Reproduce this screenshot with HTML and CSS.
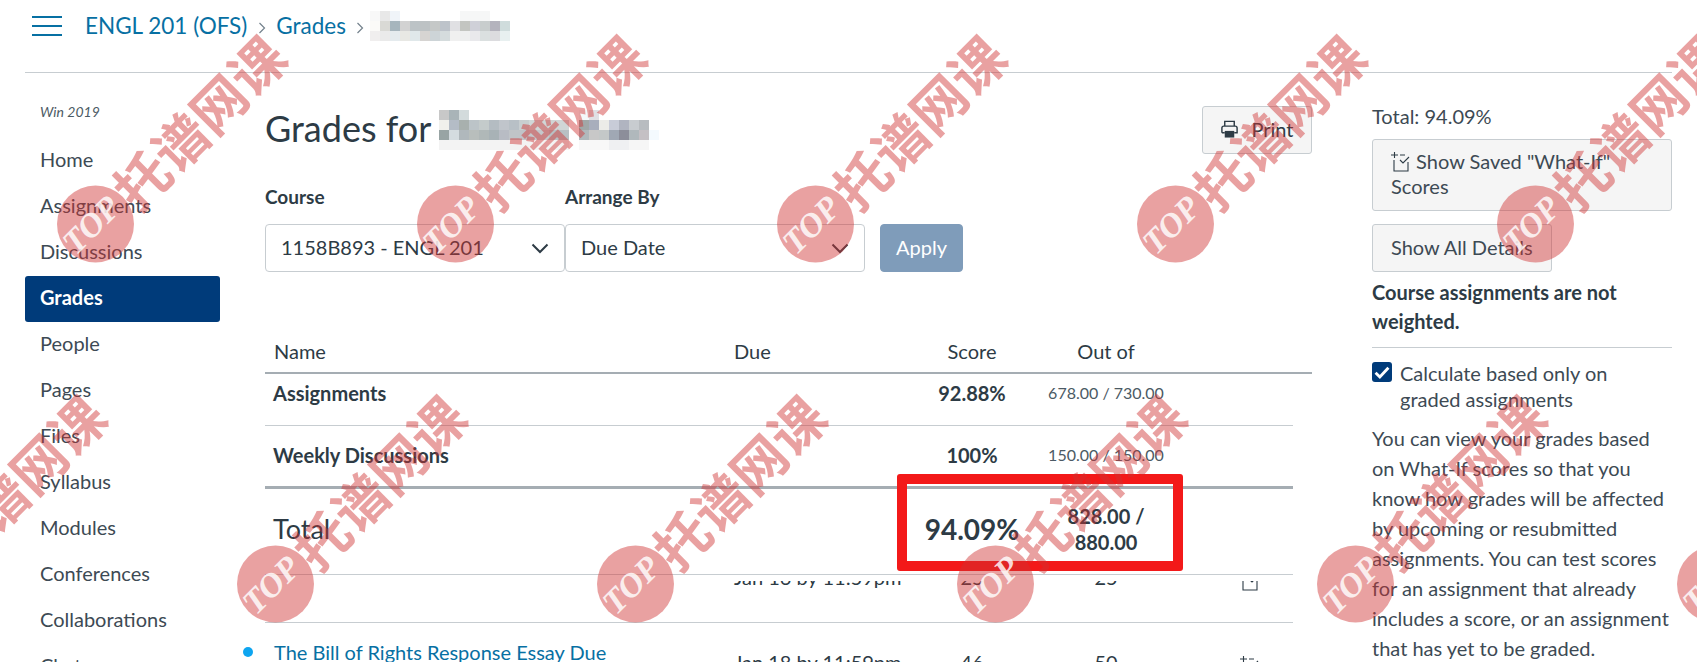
FILE: index.html
```html
<!DOCTYPE html>
<html lang="en">
<head>
<meta charset="utf-8">
<title>Grades</title>
<link rel="stylesheet" href="styles.css">
</head>
<body>
<div class="app">
  <header class="topbar">
    <div class="burger"><span></span><span></span><span></span></div>
    <nav class="crumbs">
      <a class="crumb" href="#">ENGL 201 (OFS)</a>
      <svg class="sep" viewBox="0 0 8 14"><path d="M1.5 2 6.5 7 1.5 12"/></svg>
      <a class="crumb" href="#">Grades</a>
      <svg class="sep" viewBox="0 0 8 14"><path d="M1.5 2 6.5 7 1.5 12"/></svg>
      <svg class="mosaic-crumb" width="140" height="30" viewBox="0 0 140 30" shape-rendering="crispEdges">
        <rect x="0" width="10" height="10" fill="#f8f8f8"/><rect x="10" width="10" height="10" fill="#e8e8e8"/><rect x="20" width="10" height="10" fill="#f0f4f9"/>
        <rect x="90" width="30" height="10" fill="#f6f7f7"/>
        <rect x="0" y="10" width="10" height="10" fill="#fbfaf8"/><rect x="10" y="10" width="10" height="10" fill="#d9d9d5"/><rect x="20" y="10" width="10" height="10" fill="#a6b5bd"/><rect x="30" y="10" width="10" height="10" fill="#d2d2d2"/><rect x="40" y="10" width="10" height="10" fill="#bcc3c6"/><rect x="50" y="10" width="10" height="10" fill="#bdc2c4"/><rect x="60" y="10" width="10" height="10" fill="#c5c8c7"/><rect x="70" y="10" width="10" height="10" fill="#bdc3ca"/><rect x="80" y="10" width="10" height="10" fill="#e0e0e3"/><rect x="90" y="10" width="10" height="10" fill="#c3c5c1"/><rect x="100" y="10" width="10" height="10" fill="#cfd0d8"/><rect x="110" y="10" width="10" height="10" fill="#c8cdcd"/><rect x="120" y="10" width="10" height="10" fill="#b4b3bd"/><rect x="130" y="10" width="10" height="10" fill="#cfdcdc"/>
        <rect x="0" y="20" width="10" height="10" fill="#f0eeee"/><rect x="10" y="20" width="10" height="10" fill="#eaeaea"/><rect x="20" y="20" width="10" height="10" fill="#e5ebee"/><rect x="30" y="20" width="10" height="10" fill="#e8e8e4"/><rect x="40" y="20" width="10" height="10" fill="#e0e8ea"/><rect x="50" y="20" width="10" height="10" fill="#d6d4d2"/><rect x="60" y="20" width="10" height="10" fill="#cdd4d7"/><rect x="70" y="20" width="10" height="10" fill="#d5dcdd"/><rect x="80" y="20" width="10" height="10" fill="#f0f0f0"/><rect x="90" y="20" width="10" height="10" fill="#eeefef"/><rect x="100" y="20" width="10" height="10" fill="#e9e9ec"/><rect x="110" y="20" width="10" height="10" fill="#dbe0e0"/><rect x="120" y="20" width="10" height="10" fill="#dcdcdf"/><rect x="130" y="20" width="10" height="10" fill="#e8f0f0"/>
      </svg>
    </nav>
  </header>

  <div class="layout">
    <aside class="sidebar">
      <div class="term">Win 2019</div>
      <ul class="menu">
        <li class="menu-item">Home</li>
        <li class="menu-item">Assignments</li>
        <li class="menu-item">Discussions</li>
        <li class="menu-item active">Grades</li>
        <li class="menu-item">People</li>
        <li class="menu-item">Pages</li>
        <li class="menu-item">Files</li>
        <li class="menu-item">Syllabus</li>
        <li class="menu-item">Modules</li>
        <li class="menu-item">Conferences</li>
        <li class="menu-item">Collaborations</li>
        <li class="menu-item">Chat</li>
      </ul>
    </aside>

    <main class="main">
      <div class="title-row">
        <div class="title">
          <h1 class="heading">Grades for</h1>
          <svg class="mosaic-title" width="220" height="40" viewBox="0 0 220 40" shape-rendering="crispEdges">
            <rect x="0" width="10" height="10" fill="#c8c8c8"/><rect x="10" width="10" height="10" fill="#a9b4b8"/><rect x="20" width="10" height="10" fill="#d3dbdc"/><rect x="140" width="10" height="10" fill="#f4f8fa"/><rect x="150" width="10" height="10" fill="#e0e0e4"/>
            <rect x="0" y="10" width="10" height="10" fill="#f0f0ec"/><rect x="10" y="10" width="10" height="10" fill="#b4bcc6"/><rect x="20" y="10" width="10" height="10" fill="#a8b0ae"/><rect x="30" y="10" width="10" height="10" fill="#bcc4c8"/><rect x="40" y="10" width="10" height="10" fill="#c4cbcb"/><rect x="50" y="10" width="10" height="10" fill="#b4bcc2"/><rect x="60" y="10" width="10" height="10" fill="#c0c5cb"/><rect x="70" y="10" width="10" height="10" fill="#b8c0c6"/><rect x="80" y="10" width="10" height="10" fill="#c8ced0"/><rect x="90" y="10" width="10" height="10" fill="#d0d8d8"/><rect x="100" y="10" width="30" height="10" fill="#d0d6d6"/><rect x="140" y="10" width="10" height="10" fill="#a0a8a8"/><rect x="150" y="10" width="10" height="10" fill="#a8aebc"/><rect x="160" y="10" width="10" height="10" fill="#ecece8"/><rect x="170" y="10" width="10" height="10" fill="#c8ccd8"/><rect x="180" y="10" width="10" height="10" fill="#b0b4c0"/><rect x="190" y="10" width="10" height="10" fill="#c8ccd0"/><rect x="200" y="10" width="10" height="10" fill="#b8bcc0"/>
            <rect x="0" y="20" width="10" height="10" fill="#98a4a4"/><rect x="10" y="20" width="10" height="10" fill="#d4dce0"/><rect x="20" y="20" width="10" height="10" fill="#b0b8bc"/><rect x="30" y="20" width="10" height="10" fill="#b8bebc"/><rect x="40" y="20" width="10" height="10" fill="#b0b8b8"/><rect x="50" y="20" width="10" height="10" fill="#a8b2b6"/><rect x="60" y="20" width="10" height="10" fill="#b8bcc4"/><rect x="70" y="20" width="20" height="10" fill="#c0c4c8"/><rect x="90" y="20" width="20" height="10" fill="#c4c8cc"/><rect x="110" y="20" width="20" height="10" fill="#b8c0c4"/><rect x="140" y="20" width="10" height="10" fill="#b0b8bc"/><rect x="150" y="20" width="10" height="10" fill="#c8c8c8"/><rect x="160" y="20" width="10" height="10" fill="#c4c8c8"/><rect x="170" y="20" width="10" height="10" fill="#a0a8b4"/><rect x="180" y="20" width="10" height="10" fill="#8c8e9a"/><rect x="190" y="20" width="10" height="10" fill="#b0b8bc"/><rect x="200" y="20" width="10" height="10" fill="#c4c0c4"/><rect x="210" y="20" width="10" height="10" fill="#f4fafe"/>
            <rect x="0" y="30" width="130" height="10" fill="#f3f3f3"/><rect x="140" y="30" width="30" height="10" fill="#f8f8f8"/><rect x="170" y="30" width="20" height="10" fill="#eff0f2"/><rect x="190" y="30" width="20" height="10" fill="#f6f6f6"/>
          </svg>
        </div>
        <button class="btn btn-print">
          <svg class="icon-print" viewBox="0 0 20 20"><path class="i-line" d="M5 7V2h10v5M2 14V9a2 2 0 0 1 2-2h12a2 2 0 0 1 2 2v5h-3M5 14H2"/><path class="i-fill" d="M5 12h10v7H5z"/></svg>
          <span>Print</span>
        </button>
      </div>

      <form class="filters">
        <div class="field">
          <label class="field-label">Course</label>
          <div class="select">1158B893 - ENGL 201
            <svg class="chev" viewBox="0 0 18 11"><path d="M1.5 1.5 9 9l7.5-7.5"/></svg>
          </div>
        </div>
        <div class="field">
          <label class="field-label">Arrange By</label>
          <div class="select">Due Date
            <svg class="chev" viewBox="0 0 18 11"><path d="M1.5 1.5 9 9l7.5-7.5"/></svg>
          </div>
        </div>
        <button class="btn-apply" type="button">Apply</button>
      </form>

      <div class="grades">
        <div class="row head">
          <div class="c-name">Name</div>
          <div>Due</div>
          <div class="c-center">Score</div>
          <div class="c-center">Out of</div>
        </div>
        <div class="row group group-a">
          <div class="c-name strong">Assignments</div>
          <div></div>
          <div class="c-center strong">92.88%</div>
          <div class="c-center small">678.00 / 730.00</div>
        </div>
        <div class="row group group-b">
          <div class="c-name strong">Weekly Discussions</div>
          <div></div>
          <div class="c-center strong">100%</div>
          <div class="c-center small">150.00 / 150.00</div>
        </div>
        <div class="row total">
          <div class="c-name total-name">Total</div>
          <div></div>
          <div class="c-center total-score">94.09%</div>
          <div class="c-center total-out">828.00 /<br>880.00</div>
          <div class="redbox"></div>
        </div>
        <div class="cut">
          <div class="cut-clip">
            <div class="row cut-row">
              <div class="c-name"></div>
              <div>Jan 16 by 11:59pm</div>
              <div class="c-center">25</div>
              <div class="c-center">25</div>
              <svg class="icon-whatif row-icon" viewBox="0 0 20 20"><path d="M0 3h7M3.500 0v6M3 8v11h14v-9M9 3h5M9 8l3 3 6-6"/></svg>
            </div>
          </div>
        </div>
        <div class="row last">
          <div class="c-name link"><i class="dot"></i>The Bill of Rights Response Essay Due</div>
          <div class="lower">Jan 18 by 11:59pm</div>
          <div class="c-center lower">46</div>
          <div class="c-center lower">50</div>
          <svg class="icon-whatif row-icon lower-icon" viewBox="0 0 20 20"><path d="M0 3h7M3.500 0v6M3 8v11h14v-9M9 3h5M9 8l3 3 6-6"/></svg>
        </div>
      </div>
    </main>

    <aside class="side">
      <div class="side-total">Total: 94.09%</div>
      <button class="btn btn-wide">
        <svg class="icon-whatif" viewBox="0 0 20 20"><path d="M0 3h7M3.500 0v6M3 8v11h14v-9M9 3h5M9 8l3 3 6-6"/></svg>
        Show Saved "What-If" Scores
      </button>
      <button class="btn btn-details">Show All Details</button>
      <p class="weighted">Course assignments are not weighted.</p>
      <hr class="rule">
      <label class="check">
        <span class="box"><svg viewBox="0 0 14 14"><path d="M2.500 7.500 5.500 10.500 11.500 4"/></svg></span>
        <span>Calculate based only on graded assignments</span>
      </label>
      <p class="info">You can view your grades based on What-If scores so that you know how grades will be affected by upcoming or resubmitted assignments. You can test scores for an assignment that already includes a score, or an assignment that has yet to be graded.</p>
    </aside>
  </div>

  <div class="wm-layer">
    <div class="wm-row">
      <svg class="wm" viewBox="0 0 360 360"><circle class="wm-dot" cx="95.500" cy="224" r="38.500"/><text class="wm-top" transform="translate(76 256) rotate(-45)">TOP</text><text class="wm-text" transform="translate(138 214) rotate(-45)">托谱网课</text></svg>
      <svg class="wm" viewBox="0 0 360 360"><circle class="wm-dot" cx="95.500" cy="224" r="38.500"/><text class="wm-top" transform="translate(76 256) rotate(-45)">TOP</text><text class="wm-text" transform="translate(138 214) rotate(-45)">托谱网课</text></svg>
      <svg class="wm" viewBox="0 0 360 360"><circle class="wm-dot" cx="95.500" cy="224" r="38.500"/><text class="wm-top" transform="translate(76 256) rotate(-45)">TOP</text><text class="wm-text" transform="translate(138 214) rotate(-45)">托谱网课</text></svg>
      <svg class="wm" viewBox="0 0 360 360"><circle class="wm-dot" cx="95.500" cy="224" r="38.500"/><text class="wm-top" transform="translate(76 256) rotate(-45)">TOP</text><text class="wm-text" transform="translate(138 214) rotate(-45)">托谱网课</text></svg>
      <svg class="wm" viewBox="0 0 360 360"><circle class="wm-dot" cx="95.500" cy="224" r="38.500"/><text class="wm-top" transform="translate(76 256) rotate(-45)">TOP</text><text class="wm-text" transform="translate(138 214) rotate(-45)">托谱网课</text></svg>
    </div>
    <div class="wm-row wm-row-2">
      <svg class="wm" viewBox="0 0 360 360"><circle class="wm-dot" cx="95.500" cy="224" r="38.500"/><text class="wm-top" transform="translate(76 256) rotate(-45)">TOP</text><text class="wm-text" transform="translate(138 214) rotate(-45)">托谱网课</text></svg>
      <svg class="wm" viewBox="0 0 360 360"><circle class="wm-dot" cx="95.500" cy="224" r="38.500"/><text class="wm-top" transform="translate(76 256) rotate(-45)">TOP</text><text class="wm-text" transform="translate(138 214) rotate(-45)">托谱网课</text></svg>
      <svg class="wm" viewBox="0 0 360 360"><circle class="wm-dot" cx="95.500" cy="224" r="38.500"/><text class="wm-top" transform="translate(76 256) rotate(-45)">TOP</text><text class="wm-text" transform="translate(138 214) rotate(-45)">托谱网课</text></svg>
      <svg class="wm" viewBox="0 0 360 360"><circle class="wm-dot" cx="95.500" cy="224" r="38.500"/><text class="wm-top" transform="translate(76 256) rotate(-45)">TOP</text><text class="wm-text" transform="translate(138 214) rotate(-45)">托谱网课</text></svg>
      <svg class="wm" viewBox="0 0 360 360"><circle class="wm-dot" cx="95.500" cy="224" r="38.500"/><text class="wm-top" transform="translate(76 256) rotate(-45)">TOP</text><text class="wm-text" transform="translate(138 214) rotate(-45)">托谱网课</text></svg>
      <svg class="wm" viewBox="0 0 360 360"><circle class="wm-dot" cx="95.500" cy="224" r="38.500"/><text class="wm-top" transform="translate(76 256) rotate(-45)">TOP</text><text class="wm-text" transform="translate(138 214) rotate(-45)">托谱网课</text></svg>
    </div>
  </div>
</div>
</body>
</html>
```
FILE: styles.css
```css
* { box-sizing: border-box; }
html, body { margin: 0; height: 662px; overflow: hidden; background: #fff; }
body { font-family: Lato, "Noto Sans CJK SC", sans-serif; font-size: 20px; color: #2d3b45; }
.app { position: relative; width: 1697px; height: 662px; overflow: hidden; }

.topbar { display: flex; align-items: center; margin: 0 25px; padding: 0 0 20px 7px; height: 73px; border-bottom: 1px solid #c7cdd1; }
.burger { display: flex; flex-direction: column; gap: 7px; width: 30px; margin-right: 23px; }
.burger span { display: block; height: 2px; background: #0770a3; }
.crumbs { display: flex; align-items: center; }
.crumb { color: #0770a3; text-decoration: none; font-size: 22.500px; line-height: 28px; }
.sep { width: 8px; height: 14px; margin: 3px 10.500px 0; fill: none; stroke: #73818c; stroke-width: 1.200; }
.mosaic-crumb { display: block; margin-left: -5px; }

.layout { display: flex; padding: 0 25px; }
.sidebar { width: 195px; flex: none; padding-top: 28px; }
.term { padding-left: 15px; font-size: 14px; font-style: italic; line-height: 22px; color: #4b5a64; }
.menu { list-style: none; margin: 15px 0 0; padding: 0; }
.menu-item { height: 46px; line-height: 42px; padding-left: 15px; border-radius: 3px; color: #3d4a54; }
.menu-item.active { background: #003b7a; color: #fff; font-weight: 700; }

.main { width: 1047px; flex: none; margin-left: 45px; padding-top: 33px; }
.title-row { display: flex; justify-content: space-between; align-items: flex-start; height: 48px; }
.title { display: flex; align-items: flex-start; }
.heading { margin: 0; font-size: 36px; font-weight: 400; line-height: 44px; }
.mosaic-title { display: block; margin: 4px 0 0 8px; }
.btn { font-family: inherit; font-size: 20px; color: #2d3b45; background: #f5f5f5; border: 1px solid #c7cdd1; border-radius: 3px; }
.btn-print { display: flex; align-items: center; justify-content: center; gap: 12px; width: 110px; height: 48px; padding: 0 0 2px; }
.icon-print { width: 19px; height: 20px; flex: none; }
.i-line { fill: none; stroke: #2d3b45; stroke-width: 1.500; }
.i-fill { fill: #2d3b45; }

.filters { display: flex; align-items: flex-end; margin-top: 32px; }
.field { display: flex; flex-direction: column; width: 300px; }
.field-label { font-weight: 700; font-size: 19px; line-height: 22px; margin-bottom: 16px; }
.select { position: relative; display: flex; align-items: center; height: 48px; padding: 0 15px 3px; border: 1px solid #c7cdd1; border-radius: 4px; background: #fff; }
.chev { position: absolute; right: 15px; top: 18px; width: 18px; height: 11px; fill: none; stroke: #2d3b45; stroke-width: 2; }
.btn-apply { width: 83px; height: 48px; margin-left: 15px; padding: 0 0 3px; font-family: inherit; font-size: 20px; color: #fff; background: #7f9cba; border: 1px solid #7f9cba; border-radius: 4px; }

.grades { margin-top: 58px; }
.row { display: grid; grid-template-columns: 469px 178px 120px 148px 113px; width: 1028px; }
.c-center { text-align: center; }
.c-name { padding-left: 9px; }
.strong.c-name { padding-left: 8px; }
.head { width: 1047px; height: 44px; align-items: center; border-bottom: 2px solid #a5adb3; }
.group-a { height: 52px; padding-top: 5px; line-height: 28px; border-bottom: 1px solid #c7cdd1; }
.group-b { height: 63px; align-items: center; padding-bottom: 3px; border-bottom: 3px solid #a5adb3; }
.strong { font-weight: 700; }
.small { font-size: 16px; color: #4b5a64; }
.total { position: relative; height: 86px; align-items: center; padding-bottom: 6px; border-bottom: 1px solid #c7cdd1; }
.total-name { font-size: 27px; padding-left: 8px; }
.total-score { font-size: 28px; font-weight: 700; }
.total-out { font-weight: 700; line-height: 26px; }
.redbox { position: absolute; left: 632px; top: -15px; width: 286px; height: 97px; border: 10px solid #f31919; border-radius: 3px; }
.cut { width: 1028px; height: 48px; padding-top: 6px; border-bottom: 1px solid #c7cdd1; }
.cut-clip { height: 14px; overflow: hidden; }
.cut-row { margin-top: -15px; line-height: 22px; }
.icon-whatif { width: 20px; height: 20px; fill: none; stroke: #2d3b45; stroke-width: 1.100; }
.row-icon { justify-self: start; margin-left: 60px; margin-top: 5px; }
.last { padding-top: 17px; }
.link { position: relative; color: #0770a3; white-space: nowrap; }
.dot { position: absolute; left: -22px; top: 7px; width: 10px; height: 10px; border-radius: 50%; background: #0ea5f0; }
.lower { padding-top: 10px; }
.lower-icon { margin-top: 16px; }

.side { width: 300px; flex: none; margin-left: 60px; padding-top: 31px; }
.side-total { line-height: 24px; margin-bottom: 11px; color: #3d4a54; }
.btn-wide { display: block; width: 300px; height: 72px; padding: 0 18px 3px; text-align: left; line-height: 25px; color: #3d4a54; }
.btn-wide .icon-whatif { vertical-align: -3px; }
.btn-details { display: block; width: 180px; height: 48px; margin-top: 13px; padding: 0 18px 3px; text-align: left; color: #3d4a54; white-space: nowrap; }
.weighted { margin: 6px 0 0; font-weight: 700; line-height: 29px; }
.rule { margin: 11px 0 0; border: 0; border-top: 1px solid #c7cdd1; }
.check { display: flex; margin-top: 12px; line-height: 26px; color: #3d4a54; }
.box { display: block; width: 20px; height: 20px; flex: none; margin: 2px 8px 0 0; border-radius: 3px; background: #003b7a; }
.box svg { display: block; width: 20px; height: 20px; fill: none; stroke: #fff; stroke-width: 2; }
.info { margin: 11px 0 0; line-height: 30px; color: #3d4a54; }

.wm-layer { position: absolute; inset: 0; overflow: hidden; pointer-events: none; }
.wm-row { display: flex; width: 2200px; height: 360px; }
.wm-row-2 { margin-left: -180px; }
.wm { display: block; width: 360px; height: 360px; flex: none; overflow: visible; }
.wm-dot { fill: rgba(208, 50, 50, .46); }
.wm-top { font-family: "Liberation Serif", serif; font-size: 34px; font-weight: 700; font-style: italic; fill: rgba(255, 255, 255, .82); }
.wm-text { font-family: "Noto Sans CJK SC", sans-serif; font-size: 54px; font-weight: 700; fill: rgba(208, 50, 50, .46); }
```
